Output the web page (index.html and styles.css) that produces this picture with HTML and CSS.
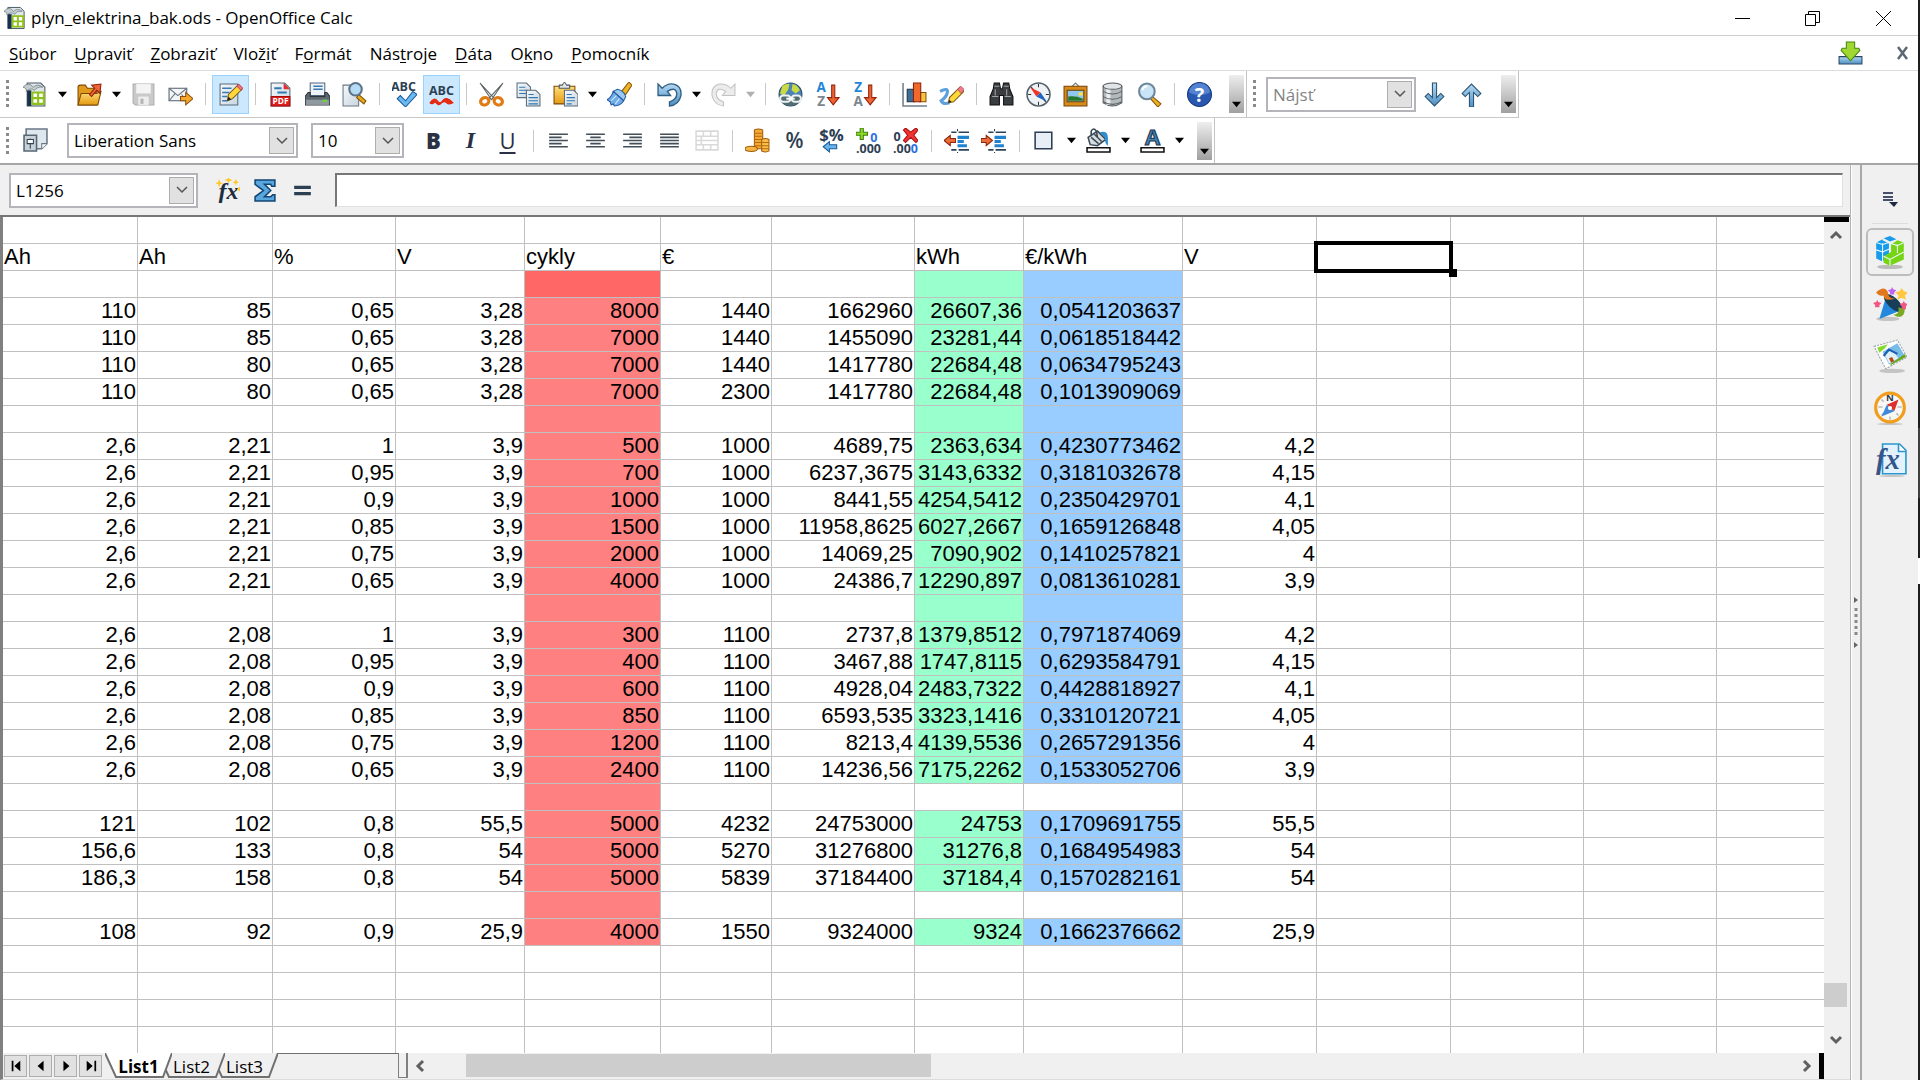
FILE: index.html
```html
<!DOCTYPE html>
<html lang="sk">
<head>
<meta charset="utf-8">
<title>plyn_elektrina_bak.ods - OpenOffice Calc</title>
<link rel="stylesheet" href="styles.css">
</head>
<body>
<svg class="defs" aria-hidden="true">
  <defs>
    <linearGradient id="gold" x1="0" y1="0" x2="0" y2="1"><stop offset="0" stop-color="#ffdf7a"/><stop offset="1" stop-color="#e59a10"/></linearGradient>
    <linearGradient id="blue" x1="0" y1="0" x2="0" y2="1"><stop offset="0" stop-color="#b4d8f2"/><stop offset="1" stop-color="#4b8fc4"/></linearGradient>
    <linearGradient id="paper" x1="0" y1="0" x2="1" y2="1"><stop offset="0" stop-color="#f6f9fb"/><stop offset="1" stop-color="#c9d5df"/></linearGradient>
    <symbol id="i-new" viewBox="0 0 24 24"><path d="M4 1h13l4 4v18H4z" fill="#dfe6ea" stroke="#4a5963"/><path d="M4 8h4v15H4z" fill="#17304f"/><path d="M0 5q5-6 10 0 4-4 9 0-5-1-8 3-4-3-8 1 1-3-3-4z" fill="#c4ced1" stroke="#56676c" stroke-width=".6"/><path d="M9 10h11v11H9z" fill="#fff" stroke="#8fc01d" stroke-width="2"/><path d="M14.500 10v11M9 15.500h11" stroke="#8fc01d" stroke-width="2"/></symbol>
    <symbol id="i-open" viewBox="0 0 24 24"><path d="M1 5q0-2 2-2h5l2 3h9v16H1z" fill="#e29a1b" stroke="#7c4706"/><path d="M4 11h15l4-2-3 13H1z" fill="url(#gold)" stroke="#7c4706"/><path d="M12 12l5-6-3-3 9-1-1 9-3-3-5 6z" fill="#ef6437" stroke="#8c200b"/></symbol>
    <symbol id="i-save" viewBox="0 0 24 24"><path d="M2 2h20v20H4l-2-2z" fill="#c9c9c9" stroke="#adadad"/><path d="M5 2h14v9H5z" fill="#f4f4f4"/><path d="M7 14h10v8H7z" fill="#eee"/><path d="M9 16h3v5H9z" fill="#b5b5b5"/></symbol>
    <symbol id="i-mail" viewBox="0 0 24 24"><path d="M1 6h17v12H1z" fill="#f3f5f6" stroke="#526070"/><path d="M1 6l8.500 7L18 6M1 18l6-7M18 18l-5-6" fill="none" stroke="#64717e"/><path d="M12 14h5v-4l7 6-7 6v-4h-5z" fill="#f6a82b" stroke="#8b4f09"/></symbol>
    <symbol id="i-edit" viewBox="0 0 24 24"><path d="M2 2h17v20H2z" fill="url(#paper)" stroke="#5b6b78"/><path d="M4 6h9M4 10h7M4 14h5M4 18h5" stroke="#3a7ab2" stroke-width="1.500"/><path d="M9 18l1-6L19 3l4 4-9 9z" fill="#ffd63c" stroke="#7a5a0c"/><path d="M18 4l2-2 4 4-2 2z" fill="#f06b7f" stroke="#a02238" stroke-width=".6"/><path d="M9 18l1-4 3 3z" fill="#222"/></symbol>
    <symbol id="i-pdf" viewBox="0 0 24 24"><path d="M3 1h13l5 5v17H3z" fill="url(#paper)" stroke="#56657a"/><path d="M15 1l6 6h-6z" fill="#e23030"/><path d="M6 6h7M9 10h9" stroke="#2f78b4" stroke-width="2"/><path d="M3 14h18v9H3z" fill="#e01d1d" stroke="#a30b0b"/><text x="12" y="21" class="t-pdf">PDF</text></symbol>
    <symbol id="i-print" viewBox="0 0 24 24"><path d="M5 1h14v12H5z" fill="#eef4fa" stroke="#56657a"/><path d="M8 4h9M8 7h9" stroke="#3a7ab2" stroke-width="1.500"/><path d="M3 10h2v4h14v-4h2l3 4v8H0v-8z" fill="#5d676e" stroke="#2d3439"/><path d="M1 17h22v5H1z" fill="#8f999e"/><path d="M17 17h4v2h-4z" fill="#66e02b"/></symbol>
    <symbol id="i-preview" viewBox="0 0 24 24"><path d="M1 3h15v20H1z" fill="url(#paper)" stroke="#6b7882"/><path d="M16 12l7 6-2 3-7-6z" fill="#e8a91e" stroke="#84540c"/><circle cx="13" cy="7" r="6" fill="#b5dcf4" stroke="#5c7388" stroke-width="2"/></symbol>
    <symbol id="i-spell" viewBox="0 0 24 24"><text x="11" y="9" class="t-abc">ABC</text><path d="M5 16l3-3 5 5 7-9 4 3-11 12z" fill="#6ab9ef" stroke="#1a5a9b"/></symbol>
    <symbol id="i-autospell" viewBox="0 0 24 24"><text x="12" y="12" class="t-abc">ABC</text><path d="M1 20q4-6 7-2t5 0q4-5 10 2-4 2-6 0t-5 0q-3 4-6-1-3 3-5 1z" fill="#ee2a10" stroke="#e0240c"/></symbol>
    <symbol id="i-cut" viewBox="0 0 24 24"><path d="M1 1l13 14-2 2zM23 1L10 15l2 2z" fill="#dfe4e6" stroke="#5b6367"/><ellipse cx="5.500" cy="18.500" rx="4" ry="3.500" fill="none" stroke="#e07a12" stroke-width="3" transform="rotate(-25 5.500 18.500)"/><ellipse cx="18.500" cy="18.500" rx="4" ry="3.500" fill="none" stroke="#e07a12" stroke-width="3" transform="rotate(25 18.500 18.500)"/></symbol>
    <symbol id="i-copy" viewBox="0 0 24 24"><path d="M1 1h9l4 4v10H1z" fill="url(#paper)" stroke="#5c6c7b"/><path d="M3 5h6M3 8h8M3 11h8" stroke="#2f78b4"/><path d="M10 8h9l4 4v11H10z" fill="url(#paper)" stroke="#5c6c7b"/><path d="M12 12h5M12 15h9M12 18h9M12 21h9" stroke="#2f78b4"/></symbol>
    <symbol id="i-paste" viewBox="0 0 24 24"><path d="M1 4h20v17H1z" fill="url(#gold)" stroke="#7c4706"/><path d="M6 6V3h3q2-5 4 0h3v3z" fill="#e3e7e9" stroke="#4f585e"/><path d="M11 8h9l4 4v11H11z" fill="url(#paper)" stroke="#5c6c7b"/><path d="M13 12h5M13 15h8M13 18h8M13 21h5" stroke="#2f78b4"/></symbol>
    <symbol id="i-brush" viewBox="0 0 24 24"><path d="M14 9l7-9 3 3-6 9z" fill="#edb326" stroke="#8a5608"/><path d="M10 7q6 1 8 7l-2 4-10-9z" fill="#9bc8ee" stroke="#23609c"/><path d="M6 9l10 9q-3 5-9 5l-1-2-2 1-1-3-3-2q4-2 6-8z" fill="#6facea" stroke="#23559b"/><path d="M9 13l-5 5M12 16l-4 5" stroke="#d5ebfc"/></symbol>
    <symbol id="i-undo" viewBox="0 0 24 24"><path d="M1 2l4 4Q10 1 16 2q8 2 7 11-2 9-11 10v-4q7-2 7-8-1-7-9-2l3 4H1z" fill="url(#blue)" stroke="#2f5f84" stroke-width="1.300"/></symbol>
    <symbol id="i-redo" viewBox="0 0 24 24"><path d="M23 2l-4 4Q14 1 8 2 0 4 1 13q2 9 11 10v-4q-7-2-7-8 1-7 9-2l-3 4h12z" fill="#ececec" stroke="#c3c3c3"/></symbol>
    <symbol id="i-link" viewBox="0 0 24 24"><circle cx="12" cy="12" r="11" fill="#4a83b8" stroke="#284967"/><path d="M4 4q4-3 7-2l-1 5-4 6-4-2zM14 2q5 1 7 6l-4 3-4-3z" fill="#c9da42"/><path d="M1 13h22l-2 6q-9 8-18 0z" fill="#526c72"/><rect x="2" y="13" width="10" height="6" rx="3" fill="none" stroke="#edf2f3" stroke-width="2"/><rect x="13" y="13" width="9" height="6" rx="3" fill="none" stroke="#edf2f3" stroke-width="2"/><path d="M8 16h8" stroke="#fff" stroke-width="2"/></symbol>
    <symbol id="i-arrow-sort" viewBox="0 0 24 24"><path d="M16 3h3v12h4l-5.500 7L12 15h4z" fill="#ee6336" stroke="#93240a"/></symbol>
    <symbol id="i-sort-az" viewBox="0 0 24 24"><text x="6" y="10" class="t-sort t-blue">A</text><text x="6" y="23" class="t-sort t-gray">Z</text><use href="#i-arrow-sort"/></symbol>
    <symbol id="i-sort-za" viewBox="0 0 24 24"><text x="6" y="10" class="t-sort t-blue">Z</text><text x="6" y="23" class="t-sort t-gray">A</text><use href="#i-arrow-sort"/></symbol>
    <symbol id="i-chart" viewBox="0 0 24 24"><path d="M1 1v22h23" fill="none" stroke="#73808b" stroke-width="1.500"/><path d="M5 7h7v12H5z" fill="#3c6d93" stroke="#1b3147"/><path d="M17 10h6v9h-6z" fill="#f8c43a" stroke="#8a4c0b"/><path d="M11 1h7v18h-7z" fill="#f0682a" stroke="#8b220b"/></symbol>
    <symbol id="i-draw" viewBox="0 0 24 24"><path d="M1 9q8-4 7 1-1 5-6 8 2 4 8 2" fill="none" stroke="#5e9fde" stroke-width="3"/><path d="M9 20l1-5L20 5l4 4-10 10z" fill="#ffd63c" stroke="#7a5a0c"/><path d="M18 7l3-3 3 3-3 4z" fill="#f17b8c" stroke="#a53a4a" stroke-width=".6"/><path d="M9 20l1-3 2 2z" fill="#222"/></symbol>
    <symbol id="i-find" viewBox="0 0 24 24"><path d="M5 1h5l1 5 1 1 1-1 1-5h5l1 6 3 7v8h-9v-9h-4v9H1v-8l3-7z" fill="#3a3d3f" stroke="#111"/><path d="M5 4h5M14 4h5M3 14h6M15 14h6M6 7v6M17 7v6" stroke="#a1a4a6"/></symbol>
    <symbol id="i-nav" viewBox="0 0 24 24"><circle cx="12" cy="12" r="11" fill="#eef2f4" stroke="#53606b" stroke-width="1.500"/><path d="M12 2v3M12 19v3M2 12h3M19 12h3M5 5l2 2M17 17l2 2" stroke="#333"/><path d="M4 5l10 5-4 4z" fill="#ef3324"/><path d="M20 19l-6-9-4 4z" fill="#2263c4"/></symbol>
    <symbol id="i-gallery" viewBox="0 0 24 24"><path d="M8 5l4-4 4 4" fill="none" stroke="#777"/><path d="M1 4h22v19H1z" fill="#d78a18" stroke="#78450b"/><path d="M4 8h16v11H4z" fill="#8ec8ee" stroke="#65410b"/><path d="M5 18v-4q7-1 14 2v2z" fill="#267828"/><path d="M15 10h4v3h-4z" fill="#ffe04a"/></symbol>
    <symbol id="i-db" viewBox="0 0 24 24"><path d="M3 4v16q9 6 18 0V4z" fill="#b4b9bc" stroke="#53595d"/><path d="M8 5v17" stroke="#eceeef" stroke-width="4"/><ellipse cx="12" cy="4" rx="9" ry="3" fill="#e2e5e7" stroke="#53595d"/><path d="M3 9q9 5 18 0M3 14q9 5 18 0M3 19q9 5 18 0" fill="none" stroke="#596065"/></symbol>
    <symbol id="i-zoom" viewBox="0 0 24 24"><path d="M15 14l8 7-3 3-7-8z" fill="#edb024" stroke="#875707"/><circle cx="9.500" cy="9" r="7.500" fill="#c8e4f6" stroke="#6e8699" stroke-width="2"/><path d="M5 8q1-4 5-4" fill="none" stroke="#fff" stroke-width="2"/></symbol>
    <symbol id="i-help" viewBox="0 0 24 24"><circle cx="12" cy="12" r="11.500" fill="#2858b0" stroke="#17377f"/><path d="M2 10a10 9 0 0 1 20 0q-10 5-20 0z" fill="#5483d0"/><text x="12" y="19" class="t-help">?</text></symbol>
    <symbol id="i-styles" viewBox="0 0 24 24"><path d="M3 1h20v14l-5 5H3z" fill="#dfe7ee" stroke="#687785" stroke-width="1.500"/><path d="M18 20v-5h5" fill="#fff" stroke="#687785"/><path d="M1 7h12v15H1z" fill="#c7d2db" stroke="#566673" stroke-width="1.500"/><path d="M7 10v10" stroke="#34424e"/><path d="M4 11h6v4H4z" fill="#fff" stroke="#34424e"/></symbol>
    <symbol id="i-left" viewBox="0 0 24 24"><path d="M3 6h18M3 9h12M3 12h18M3 15h12M3 18h18" stroke="#434f58" stroke-width="1.500"/></symbol>
    <symbol id="i-center" viewBox="0 0 24 24"><path d="M3 6h18M7 9h10M3 12h18M7 15h10M3 18h18" stroke="#434f58" stroke-width="1.500"/></symbol>
    <symbol id="i-right" viewBox="0 0 24 24"><path d="M3 6h18M9 9h12M3 12h18M9 15h12M3 18h18" stroke="#434f58" stroke-width="1.500"/></symbol>
    <symbol id="i-justify" viewBox="0 0 24 24"><path d="M3 6h18M3 9h18M3 12h18M3 15h18M3 18h18" stroke="#434f58" stroke-width="1.500"/></symbol>
    <symbol id="i-merge" viewBox="0 0 24 24"><path d="M2 3h21v18H2zM2 8h21M2 12h21M2 16h21M9 3v5M16 3v5M9 16v5M16 16v5M7 8v8" fill="none" stroke="#d9d9d9" stroke-width="1.500"/></symbol>
    <symbol id="i-money" viewBox="0 0 24 24"><path d="M9 2q4-2 8 0v18H9z" fill="#f4aa33" stroke="#a25b09"/><path d="M16 11q4-2 7 0v11q-3 2-7 0z" fill="#f8bd4a" stroke="#a25b09"/><path d="M9 5h8M9 8h8M9 11h7M9 14h7M9 17h7M16 14h7M16 17h7M16 20h7" stroke="#b66b0c"/><ellipse cx="6" cy="20" rx="6" ry="2.500" fill="#f6b445" stroke="#a25b09"/></symbol>
    <symbol id="i-percent" viewBox="0 0 24 24"><text x="12" y="19" class="t-percent">%</text></symbol>
    <symbol id="i-standard" viewBox="0 0 24 24"><text x="12" y="12" class="t-num">$%</text><path d="M4 18l6-5v3h7v4h-7v3z" fill="#6ab5ec" stroke="#1c5b96"/></symbol>
    <symbol id="i-adddec" viewBox="0 0 24 24"><path d="M4 0h3v4h4v3H7v4H4V7H0V4h4z" fill="#92d629" stroke="#3b8209"/><text x="17" y="13" class="t-dec t-navyblue">0</text><text x="12" y="24" class="t-dec">.000</text></symbol>
    <symbol id="i-deldec" viewBox="0 0 24 24"><text x="4" y="12" class="t-dec">0</text><text x="12" y="24" class="t-dec">.00<tspan class="t-navyblue">0</tspan></text><path d="M10 2l2-2 5 4 5-4 2 2-4 5 4 5-2 2-5-5-5 5-2-2 4-5z" fill="#ef3434" stroke="#a80d0d"/></symbol>
    <symbol id="i-indent-lines" viewBox="0 0 24 24"><path d="M7 4h5M14 4h10M7 21h5M14 21h10" stroke="#2d4358" stroke-width="1.500"/><path d="M13 9h11M13 13h6M13 17h9" stroke="#1f83d0" stroke-width="3"/><path d="M13 1v23" stroke="#2d4358" stroke-dasharray="2 20"/></symbol>
    <symbol id="i-outdent" viewBox="0 0 24 24"><use href="#i-indent-lines"/><path d="M0 12l6-5v3h5v4H6v3z" fill="#ea6c38" stroke="#8c250b"/></symbol>
    <symbol id="i-indent" viewBox="0 0 24 24"><use href="#i-indent-lines"/><path d="M11 12L5 7v3H0v4h5v3z" fill="#ea6c38" stroke="#8c250b"/></symbol>
    <symbol id="i-border" viewBox="0 0 24 24"><path d="M3 4h16v16H3z" fill="#e7eef5" stroke="#2d3f52" stroke-width="1.500"/></symbol>
    <symbol id="i-fill" viewBox="0 0 24 24"><path d="M2 9l9-6 8 8-8 6-7-1z" fill="#d7dcdf" stroke="#3b4a56" stroke-width="1.500"/><path d="M5 8V3q2-4 5 0l1 6M8 6l7 7M5 9l7 6" fill="none" stroke="#3b4a56" stroke-width="1.500"/><path d="M13 4q8-2 8 5v8q-3-2-3-8l-3-3z" fill="#2d8fd0"/><path d="M1 19h22v4H1z" fill="#fff" stroke="#111" stroke-width="1.500"/></symbol>
    <symbol id="i-fontcolor" viewBox="0 0 24 24"><text x="12" y="16" class="t-fontcolor">A</text><path d="M1 19h22v4H1z" fill="#fff" stroke="#111" stroke-width="1.500"/></symbol>
    <symbol id="i-down" viewBox="0 0 24 24"><path d="M10 1h4v14l4-4 3 3-9 9-9-9 3-3 4 4z" fill="url(#blue)" stroke="#28506f"/></symbol>
    <symbol id="i-up" viewBox="0 0 24 24"><path d="M10 24h4V10l4 4 3-3-9-9-9 9 3 3 4-4z" fill="url(#blue)" stroke="#28506f"/></symbol>
    <symbol id="i-fx" viewBox="0 0 24 24"><text x="12" y="20" class="t-fx">fx</text><path d="M3 1l1 3 3 1-3 1-1 3-1-3-3-1 3-1zM12-1l1 2 3 1-3 1-1 2-1-2-3-1 3-1zM19 1l1 2 2 1-2 1-1 2-1-2-2-1 2-1zM23 8v5l-3-2z" fill="#ffc62c"/></symbol>
    <symbol id="i-sum" viewBox="0 0 24 24"><path d="M2 2h19v6h-3l-1-2h-6l6 6-6 6h6l2-2h2v6H2v-4l8-6-8-6z" fill="#5aa7df" stroke="#114673" stroke-width="1.500"/></symbol>
    <symbol id="i-equals" viewBox="0 0 24 24"><path d="M4 9h16M4 15h16" stroke="#2d3f52" stroke-width="3"/></symbol>
    <symbol id="i-update" viewBox="0 0 24 24"><path d="M1 15h22v7H1z" fill="url(#blue)" stroke="#2a4560"/><path d="M8 1h8v6h4l1 2-9 10L3 9l1-2h4z" fill="#a1d733" stroke="#45870b"/></symbol>
    <symbol id="i-chev-down" viewBox="0 0 14 14"><path d="M2 4l5 5 5-5" fill="none" stroke="currentColor" stroke-width="1.500"/></symbol>
    <symbol id="i-caret" viewBox="0 0 10 10"><path d="M0 2h10L5 8z" fill="currentColor"/></symbol>
    <symbol id="s-cubes" viewBox="0 0 32 32"><ellipse cx="16" cy="30" rx="12" ry="2" fill="#bbb"/><path d="M3 7l6-3v21l-6-3zM9 5l6 3v18l-6-2zM10 3l6-2 6 3-6 2z" fill="#189bea"/><path d="M17 9l6-4 6 2v16l-13 6-6-3v-6l7-4z" fill="#76d414"/><path d="M3 14l6 2 7-3M9 8v17M10 20l6 3 13-7M16 8v5M23 9v8M16 23v6M3 7l6 2 6-2M17 8l6 2 6-3" fill="none" stroke="#e9fbff"/></symbol>
    <symbol id="s-magic" viewBox="0 0 32 32"><ellipse cx="14" cy="30" rx="11" ry="2" fill="#c4c4c4"/><path d="M6 30l6-20q12 2 14 12z" fill="#2388db"/><ellipse cx="19" cy="15" rx="11" ry="5" transform="rotate(43 19 15)" fill="#173d57"/><path d="M3 5q8-7 11 0 0 6 7 6-11 3-11-3-5 1-7-3z" fill="#e1781e"/><path d="M24 19q1 7-5 7 10 6 11-5z" fill="#7aaa22"/><path d="M27 1l2 3 4 1-3 3 1 4-4-2-4 2 1-4-3-3 4-1z" fill="#ffc83d"/><path d="M18 0l1 2 3 1-2 2v2h-2l-2 0v-2l-2-2 3-1z" fill="#c263ef"/><path d="M4 12l1 2 3 1-2 2v2H2v-2l-2-2 3-1zM29 13l1 2 3 1-2 2v3h-4v-3l-2-2 3-1z" fill="#f05781"/></symbol>
    <symbol id="s-picture" viewBox="0 0 32 32"><ellipse cx="18" cy="30" rx="12" ry="2" fill="#c4c4c4"/><path d="M1 7L23 1l9 16-20 11z" fill="#fff" stroke="#9da5a7" stroke-dasharray="2 1"/><path d="M4 8l10-3-3 4-5 4z" fill="#84d929"/><path d="M9 12l14-8 7 12-15 8z" fill="#78bce8"/><path d="M11 14l7-4 6 8-9 5z" fill="#dff0f8"/><path d="M10 16l5-6 8 4" fill="none" stroke="#1c5fae" stroke-width="2"/><path d="M17 23l13-9 1 3-15 8z" fill="#65a719"/><path d="M15 18l3-1 2 4-3 1z" fill="#b64a13"/></symbol>
    <symbol id="s-compass" viewBox="0 0 32 32"><ellipse cx="16" cy="31" rx="12" ry="1" fill="#c4c4c4"/><circle cx="16" cy="15.500" r="13.500" fill="#f8f8f6" stroke="#f19d1d" stroke-width="3"/><path d="M5 15h4M23 15h4M16 24v3M8 8l2 2M8 23l2-2M24 23l-2-2" stroke="#bbb" stroke-width="1.500"/><text x="16" y="9" class="t-north">N</text><path d="M24 8l-4 11-7-6z" fill="#de2f2b"/><path d="M8 24l5-11 7 6z" fill="#3e88de"/><circle cx="16" cy="16" r="2" fill="#fff"/></symbol>
    <symbol id="s-function" viewBox="0 0 32 32"><ellipse cx="18" cy="31" rx="12" ry="1" fill="#c4c4c4"/><path d="M9 1h16l6 6v22H9z" fill="#e3f2fc" stroke="#2c96cc" stroke-width="1.500"/><path d="M24 1v7h7" fill="#fff" stroke="#2c96cc" stroke-width="1.500"/><text x="14" y="24" class="t-func">fx</text></symbol>
  </defs>
</svg>

<div class="window">
  <header class="titlebar">
    <svg class="app-icon"><use href="#i-new"/></svg>
    <h1 class="title">plyn_elektrina_bak.ods - OpenOffice Calc</h1>
    <div class="window-buttons">
      <button aria-label="Minimalizovať"><svg viewBox="0 0 20 20"><path d="M2 10.500h15" stroke="#000"/></svg></button>
      <button aria-label="Obnoviť"><svg viewBox="0 0 20 20"><path d="M2.500 6.500h10v11h-10zM5.500 6V3.500h11v11H13" fill="none" stroke="#000"/></svg></button>
      <button aria-label="Zavrieť"><svg viewBox="0 0 20 20"><path d="M3 3l15 15M18 3L3 18" stroke="#000"/></svg></button>
    </div>
  </header>

  <nav class="menubar">
    <button><span><u>S</u>úbor</span></button>
    <button><span><u>U</u>praviť</span></button>
    <button><span><u>Z</u>obraziť</span></button>
    <button><span>Vlož<u>i</u>ť</span></button>
    <button><span>F<u>o</u>rmát</span></button>
    <button><span>Nás<u>t</u>roje</span></button>
    <button><span><u>D</u>áta</span></button>
    <button><span>O<u>k</u>no</span></button>
    <button><span><u>P</u>omocník</span></button>
    <div class="menu-right">
      <button aria-label="Aktualizácia"><svg class="icon"><use href="#i-update"/></svg></button>
      <button aria-label="Zavrieť dokument"><svg class="close-doc" viewBox="0 0 14 16"><path d="M2 2l9 12M11 2L2 14" stroke="#5b6772" stroke-width="2.500"/></svg></button>
    </div>
  </nav>

  <div class="toolrow">
    <div class="toolbar">
      <span class="grip"></span>
      <button class="tool" aria-label="Nový"><svg class="icon"><use href="#i-new"/></svg></button><button class="drop" aria-label="Nový, ponuka"><svg><use href="#i-caret"/></svg></button>
      <button class="tool" aria-label="Otvoriť"><svg class="icon"><use href="#i-open"/></svg></button><button class="drop" aria-label="Otvoriť, ponuka"><svg><use href="#i-caret"/></svg></button>
      <button class="tool" aria-label="Uložiť" disabled><svg class="icon"><use href="#i-save"/></svg></button>
      <button class="tool" aria-label="E-mail"><svg class="icon"><use href="#i-mail"/></svg></button>
      <span class="sep"></span>
      <button class="tool on" aria-label="Upraviť súbor"><svg class="icon"><use href="#i-edit"/></svg></button>
      <span class="sep"></span>
      <button class="tool" aria-label="Export do PDF"><svg class="icon"><use href="#i-pdf"/></svg></button>
      <button class="tool" aria-label="Tlačiť"><svg class="icon"><use href="#i-print"/></svg></button>
      <button class="tool" aria-label="Ukážka strany"><svg class="icon"><use href="#i-preview"/></svg></button>
      <span class="sep"></span>
      <button class="tool" aria-label="Kontrola pravopisu"><svg class="icon"><use href="#i-spell"/></svg></button>
      <button class="tool on" aria-label="Automatická kontrola pravopisu"><svg class="icon"><use href="#i-autospell"/></svg></button>
      <span class="sep"></span>
      <button class="tool" aria-label="Vystrihnúť"><svg class="icon"><use href="#i-cut"/></svg></button>
      <button class="tool" aria-label="Kopírovať"><svg class="icon"><use href="#i-copy"/></svg></button>
      <button class="tool" aria-label="Vložiť"><svg class="icon"><use href="#i-paste"/></svg></button><button class="drop" aria-label="Vložiť, ponuka"><svg><use href="#i-caret"/></svg></button>
      <button class="tool" aria-label="Štetec formátu"><svg class="icon"><use href="#i-brush"/></svg></button>
      <span class="sep"></span>
      <button class="tool" aria-label="Späť"><svg class="icon"><use href="#i-undo"/></svg></button><button class="drop" aria-label="Späť, ponuka"><svg><use href="#i-caret"/></svg></button>
      <button class="tool" aria-label="Znova" disabled><svg class="icon"><use href="#i-redo"/></svg></button><button class="drop off" aria-label="Znova, ponuka" disabled><svg><use href="#i-caret"/></svg></button>
      <span class="sep"></span>
      <button class="tool" aria-label="Hypertextový odkaz"><svg class="icon"><use href="#i-link"/></svg></button>
      <button class="tool" aria-label="Zoradiť vzostupne"><svg class="icon"><use href="#i-sort-az"/></svg></button>
      <button class="tool" aria-label="Zoradiť zostupne"><svg class="icon"><use href="#i-sort-za"/></svg></button>
      <span class="sep"></span>
      <button class="tool" aria-label="Graf"><svg class="icon"><use href="#i-chart"/></svg></button>
      <button class="tool" aria-label="Kresliť"><svg class="icon"><use href="#i-draw"/></svg></button>
      <span class="sep"></span>
      <button class="tool" aria-label="Hľadať"><svg class="icon"><use href="#i-find"/></svg></button>
      <button class="tool" aria-label="Navigátor"><svg class="icon"><use href="#i-nav"/></svg></button>
      <button class="tool" aria-label="Galéria"><svg class="icon"><use href="#i-gallery"/></svg></button>
      <button class="tool" aria-label="Zdroje dát"><svg class="icon"><use href="#i-db"/></svg></button>
      <button class="tool" aria-label="Lupa"><svg class="icon"><use href="#i-zoom"/></svg></button>
      <span class="sep"></span>
      <button class="tool" aria-label="Pomocník"><svg class="icon"><use href="#i-help"/></svg></button>
      <button class="overflow" aria-label="Viac"><svg><use href="#i-caret"/></svg></button>
    </div>
    <div class="toolbar">
      <span class="grip"></span>
      <div class="combo combo-find"><input type="text" placeholder="Nájsť" aria-label="Nájsť"><button aria-label="História hľadania"><svg><use href="#i-chev-down"/></svg></button></div>
      <button class="tool" aria-label="Nájsť ďalšie"><svg class="icon"><use href="#i-down"/></svg></button>
      <button class="tool" aria-label="Nájsť predchádzajúce"><svg class="icon"><use href="#i-up"/></svg></button>
      <button class="overflow" aria-label="Viac"><svg><use href="#i-caret"/></svg></button>
    </div>
  </div>

  <div class="toolrow toolrow-format">
    <div class="toolbar">
      <span class="grip"></span>
      <button class="tool" aria-label="Štýly"><svg class="icon"><use href="#i-styles"/></svg></button>
      <div class="combo combo-font"><select aria-label="Názov písma"><option>Liberation Sans</option></select><button aria-label="Zoznam písiem"><svg><use href="#i-chev-down"/></svg></button></div>
      <div class="combo combo-size"><select aria-label="Veľkosť písma"><option>10</option></select><button aria-label="Zoznam veľkostí"><svg><use href="#i-chev-down"/></svg></button></div>
      <button class="tool letter bold" aria-label="Tučné">B</button>
      <button class="tool letter italic" aria-label="Kurzíva">I</button>
      <button class="tool letter under" aria-label="Podčiarknuté">U</button>
      <span class="sep"></span>
      <button class="tool" aria-label="Vľavo"><svg class="icon"><use href="#i-left"/></svg></button>
      <button class="tool" aria-label="Na stred"><svg class="icon"><use href="#i-center"/></svg></button>
      <button class="tool" aria-label="Vpravo"><svg class="icon"><use href="#i-right"/></svg></button>
      <button class="tool" aria-label="Do bloku"><svg class="icon"><use href="#i-justify"/></svg></button>
      <button class="tool" aria-label="Zlúčiť bunky" disabled><svg class="icon"><use href="#i-merge"/></svg></button>
      <span class="sep"></span>
      <button class="tool" aria-label="Mena"><svg class="icon"><use href="#i-money"/></svg></button>
      <button class="tool" aria-label="Percentá"><svg class="icon"><use href="#i-percent"/></svg></button>
      <button class="tool" aria-label="Štandardný formát"><svg class="icon"><use href="#i-standard"/></svg></button>
      <button class="tool" aria-label="Pridať desatinné miesto"><svg class="icon"><use href="#i-adddec"/></svg></button>
      <button class="tool" aria-label="Odstrániť desatinné miesto"><svg class="icon"><use href="#i-deldec"/></svg></button>
      <span class="sep"></span>
      <button class="tool" aria-label="Zmenšiť odsadenie"><svg class="icon"><use href="#i-outdent"/></svg></button>
      <button class="tool" aria-label="Zväčšiť odsadenie"><svg class="icon"><use href="#i-indent"/></svg></button>
      <span class="sep"></span>
      <button class="tool" aria-label="Orámovanie"><svg class="icon"><use href="#i-border"/></svg></button><button class="drop" aria-label="Orámovanie, ponuka"><svg><use href="#i-caret"/></svg></button>
      <button class="tool" aria-label="Farba pozadia"><svg class="icon"><use href="#i-fill"/></svg></button><button class="drop" aria-label="Farba pozadia, ponuka"><svg><use href="#i-caret"/></svg></button>
      <button class="tool" aria-label="Farba písma"><svg class="icon"><use href="#i-fontcolor"/></svg></button><button class="drop" aria-label="Farba písma, ponuka"><svg><use href="#i-caret"/></svg></button>
      <button class="overflow" aria-label="Viac"><svg><use href="#i-caret"/></svg></button>
    </div>
  </div>

  <div class="workspace">
    <main class="document">
      <div class="formulabar">
        <div class="combo combo-name"><input type="text" value="L1256" aria-label="Pole názvu"><button aria-label="Zoznam názvov"><svg><use href="#i-chev-down"/></svg></button></div>
        <button class="tool" aria-label="Sprievodca funkciou"><svg class="icon"><use href="#i-fx"/></svg></button>
        <button class="tool" aria-label="Súčet"><svg class="icon"><use href="#i-sum"/></svg></button>
        <button class="tool" aria-label="Funkcia"><svg class="icon"><use href="#i-equals"/></svg></button>
        <input class="formula" type="text" aria-label="Vstupný riadok">
      </div>

      <div class="sheet-row">
        <div class="sheet">
          <table>
            <colgroup><col class="w135"><col class="w135"><col class="w123"><col class="w129"><col class="w136"><col class="w111"><col class="w143"><col class="w109"><col class="w159"><col class="w134"><col class="w134"><col class="w133"><col class="w133"><col></colgroup>
            <tbody>
            <tr><td><td><td><td><td><td><td><td><td><td><td><td><td><td></tr>
            <tr class="head"><td>Ah<td>Ah<td>%<td>V<td>cykly<td>€<td><td>kWh<td>€/kWh<td>V<td class="selected"><td><td><td></tr>
            <tr><td><td><td><td><td class="red-strong"><td><td><td class="green"><td class="blue"><td><td><td><td><td></tr>
            <tr><td>110<td>85<td>0,65<td>3,28<td class="red">8000<td>1440<td>1662960<td class="green">26607,36<td class="blue">0,0541203637<td><td><td><td><td></tr>
            <tr><td>110<td>85<td>0,65<td>3,28<td class="red">7000<td>1440<td>1455090<td class="green">23281,44<td class="blue">0,0618518442<td><td><td><td><td></tr>
            <tr><td>110<td>80<td>0,65<td>3,28<td class="red">7000<td>1440<td>1417780<td class="green">22684,48<td class="blue">0,0634795243<td><td><td><td><td></tr>
            <tr><td>110<td>80<td>0,65<td>3,28<td class="red">7000<td>2300<td>1417780<td class="green">22684,48<td class="blue">0,1013909069<td><td><td><td><td></tr>
            <tr><td><td><td><td><td class="red"><td><td><td class="green"><td class="blue"><td><td><td><td><td></tr>
            <tr><td>2,6<td>2,21<td>1<td>3,9<td class="red">500<td>1000<td>4689,75<td class="green">2363,634<td class="blue">0,4230773462<td>4,2<td><td><td><td></tr>
            <tr><td>2,6<td>2,21<td>0,95<td>3,9<td class="red">700<td>1000<td>6237,3675<td class="green">3143,6332<td class="blue">0,3181032678<td>4,15<td><td><td><td></tr>
            <tr><td>2,6<td>2,21<td>0,9<td>3,9<td class="red">1000<td>1000<td>8441,55<td class="green">4254,5412<td class="blue">0,2350429701<td>4,1<td><td><td><td></tr>
            <tr><td>2,6<td>2,21<td>0,85<td>3,9<td class="red">1500<td>1000<td>11958,8625<td class="green">6027,2667<td class="blue">0,1659126848<td>4,05<td><td><td><td></tr>
            <tr><td>2,6<td>2,21<td>0,75<td>3,9<td class="red">2000<td>1000<td>14069,25<td class="green">7090,902<td class="blue">0,1410257821<td>4<td><td><td><td></tr>
            <tr><td>2,6<td>2,21<td>0,65<td>3,9<td class="red">4000<td>1000<td>24386,7<td class="green">12290,897<td class="blue">0,0813610281<td>3,9<td><td><td><td></tr>
            <tr><td><td><td><td><td class="red"><td><td><td class="green"><td class="blue"><td><td><td><td><td></tr>
            <tr><td>2,6<td>2,08<td>1<td>3,9<td class="red">300<td>1100<td>2737,8<td class="green">1379,8512<td class="blue">0,7971874069<td>4,2<td><td><td><td></tr>
            <tr><td>2,6<td>2,08<td>0,95<td>3,9<td class="red">400<td>1100<td>3467,88<td class="green">1747,8115<td class="blue">0,6293584791<td>4,15<td><td><td><td></tr>
            <tr><td>2,6<td>2,08<td>0,9<td>3,9<td class="red">600<td>1100<td>4928,04<td class="green">2483,7322<td class="blue">0,4428818927<td>4,1<td><td><td><td></tr>
            <tr><td>2,6<td>2,08<td>0,85<td>3,9<td class="red">850<td>1100<td>6593,535<td class="green">3323,1416<td class="blue">0,3310120721<td>4,05<td><td><td><td></tr>
            <tr><td>2,6<td>2,08<td>0,75<td>3,9<td class="red">1200<td>1100<td>8213,4<td class="green">4139,5536<td class="blue">0,2657291356<td>4<td><td><td><td></tr>
            <tr><td>2,6<td>2,08<td>0,65<td>3,9<td class="red">2400<td>1100<td>14236,56<td class="green">7175,2262<td class="blue">0,1533052706<td>3,9<td><td><td><td></tr>
            <tr><td><td><td><td><td class="red"><td><td><td><td><td><td><td><td><td></tr>
            <tr><td>121<td>102<td>0,8<td>55,5<td class="red">5000<td>4232<td>24753000<td class="green">24753<td class="blue">0,1709691755<td>55,5<td><td><td><td></tr>
            <tr><td>156,6<td>133<td>0,8<td>54<td class="red">5000<td>5270<td>31276800<td class="green">31276,8<td class="blue">0,1684954983<td>54<td><td><td><td></tr>
            <tr><td>186,3<td>158<td>0,8<td>54<td class="red">5000<td>5839<td>37184400<td class="green">37184,4<td class="blue">0,1570282161<td>54<td><td><td><td></tr>
            <tr><td><td><td><td><td class="red"><td><td><td><td><td><td><td><td><td></tr>
            <tr><td>108<td>92<td>0,9<td>25,9<td class="red">4000<td>1550<td>9324000<td class="green">9324<td class="blue">0,1662376662<td>25,9<td><td><td><td></tr>
            <tr><td><td><td><td><td><td><td><td><td><td><td><td><td><td></tr>
            <tr><td><td><td><td><td><td><td><td><td><td><td><td><td><td></tr>
            <tr><td><td><td><td><td><td><td><td><td><td><td><td><td><td></tr>
            <tr><td><td><td><td><td><td><td><td><td><td><td><td><td><td></tr>
            </tbody>
          </table>
        </div>
        <div class="vscroll">
          <span class="vsplit"></span>
          <button aria-label="Nahor"><svg viewBox="0 0 14 14"><path d="M2 10l5-5 5 5" fill="none" stroke="#606060" stroke-width="3"/></svg></button>
          <div class="vtrack"><div class="vthumb"></div></div>
          <button aria-label="Nadol"><svg viewBox="0 0 14 14"><path d="M2 4l5 5 5-5" fill="none" stroke="#606060" stroke-width="3"/></svg></button>
        </div>
      </div>

      <div class="bottombar">
        <div class="sheet-nav">
          <button aria-label="Prvý hárok"><svg viewBox="0 0 14 14"><path d="M12 1v12L5 7zM2 1h2v12H2z"/></svg></button>
          <button aria-label="Predchádzajúci hárok"><svg viewBox="0 0 14 14"><path d="M10 1v12L3 7z"/></svg></button>
          <button aria-label="Nasledujúci hárok"><svg viewBox="0 0 14 14"><path d="M4 1v12l7-6z"/></svg></button>
          <button aria-label="Posledný hárok"><svg viewBox="0 0 14 14"><path d="M2 1v12l7-6zM11 1h2v12h-2z"/></svg></button>
        </div>
        <div class="tabs">
          <button class="tab active"><svg viewBox="0 0 67 26"><path d="M0 0l11 24h47L67 0" fill="#fff" stroke="#707070" stroke-width="2"/></svg><span>List1</span></button>
          <button class="tab second"><svg viewBox="0 0 67 26"><path d="M0 0l11 24h47L67 0" fill="#f0f0f0" stroke="#707070" stroke-width="2"/></svg><span>List2</span></button>
          <button class="tab"><svg viewBox="0 0 67 26"><path d="M0 0l11 24h47L67 0" fill="#f0f0f0" stroke="#707070" stroke-width="2"/></svg><span>List3</span></button>
        </div>
        <span class="tab-split"></span>
        <div class="hscroll">
          <button aria-label="Doľava"><svg viewBox="0 0 14 14"><path d="M10 2L5 7l5 5" fill="none" stroke="#606060" stroke-width="3"/></svg></button>
          <div class="htrack"><div class="hthumb"></div></div>
          <button aria-label="Doprava"><svg viewBox="0 0 14 14"><path d="M4 2l5 5-5 5" fill="none" stroke="#606060" stroke-width="3"/></svg></button>
          <span class="hsplit"></span>
        </div>
        <span class="corner"></span>
      </div>
    </main>

    <div class="splitter"><svg viewBox="0 0 6 54"><path d="M1 1l4 3-4 3zM1 46l4 3-4 3z" fill="#666"/><path d="M3 12v28" stroke="#888" stroke-width="3" stroke-dasharray="3 3"/></svg></div>

    <aside class="sidebar">
      <button class="side-menu" aria-label="Nastavenia bočnej lišty"><svg viewBox="0 0 16 16"><path d="M1 2h10M1 6h10M1 9h10" stroke="#44506b" stroke-width="2"/><path d="M7 11h9l-4 5z" fill="#1c2940"/></svg></button>
      <button class="side on" aria-label="Vlastnosti"><svg><use href="#s-cubes"/></svg></button>
      <button class="side" aria-label="Štýly a formátovanie"><svg><use href="#s-magic"/></svg></button>
      <button class="side" aria-label="Galéria"><svg><use href="#s-picture"/></svg></button>
      <button class="side" aria-label="Navigátor"><svg><use href="#s-compass"/></svg></button>
      <button class="side" aria-label="Funkcie"><svg><use href="#s-function"/></svg></button>
    </aside>
  </div>
</div>
<div class="desktop-edge"></div>
</body>
</html>
```
FILE: styles.css
```css
* { box-sizing: border-box; }

body {
  margin: 0;
  display: flex;
  height: 100vh;
  overflow: hidden;
  background: #fff;
  color: #000;
  font: 17px "Open Sans", "Noto Sans", sans-serif;
}

button, input, select { font: inherit; color: inherit; }

button {
  display: flex;
  align-items: center;
  justify-content: center;
  margin: 0;
  padding: 0;
  border: 0;
  background: none;
}

.defs { position: absolute; width: 0; height: 0; }
.icon { width: 25px; height: 25px; overflow: visible; }

.window { flex: 1; min-width: 0; display: flex; flex-direction: column; }

.desktop-edge {
  width: 2px;
  background: linear-gradient(#1e1e1e 0 428px, #3d413d 428px 498px, #1e1e1e 498px 558px, #fff 558px 584px, #1e1e1e 584px);
}

/* Title bar */
.titlebar {
  display: flex;
  align-items: center;
  height: 36px;
  padding-left: 4px;
  border-bottom: 1px solid #cfcfcf;
}
.app-icon { width: 23px; height: 24px; margin-right: 4px; }
.title { flex: 1; margin: 0; font-size: 17px; font-weight: 400; }
.window-buttons { display: flex; }
.window-buttons button { width: 70px; height: 32px; }
.window-buttons svg { width: 20px; height: 20px; }

/* Menu */
.menubar {
  display: flex;
  align-items: center;
  gap: 18px;
  height: 35px;
  padding-left: 9px;
  border-bottom: 1px solid #dcdcdc;
}
.menubar u { text-decoration: underline 1px; text-underline-offset: 2px; text-decoration-skip-ink: none; }
.menu-right { display: flex; align-items: center; gap: 33px; margin-left: auto; padding-right: 8px; }
.close-doc { width: 14px; height: 16px; }

/* Toolbars */
.toolrow { display: flex; height: 47px; }
.toolrow-format { border-bottom: 2px solid #a6a6a6; }
.toolbar {
  display: flex;
  align-items: center;
  padding-left: 6px;
  border-right: 1px solid #c3c3c3;
  border-bottom: 1px solid #c9c9c9;
}
.toolrow-format .toolbar { border-bottom: 0; }
.grip {
  width: 3px;
  height: 28px;
  margin-right: 8px;
  background: repeating-linear-gradient(#8a8a8a 0 3px, transparent 3px 6px);
}
.tool { width: 37px; height: 39px; }
.tool.on { background: #cce8ff; border: 1px solid #99d1ff; }
.drop { width: 17px; height: 39px; }
.drop svg, .overflow svg { width: 9px; height: 9px; }
.off { color: #b0b0b0; }
.sep { width: 13px; height: 22px; background: linear-gradient(#c8c8c8, #c8c8c8) center / 1px 100% no-repeat; }
.toolrow-format .sep { width: 14px; }
.overflow {
  width: 15px;
  height: 38px;
  margin: 0 2px 0 11px;
  padding-bottom: 4px;
  align-items: flex-end;
  background: linear-gradient(#eee, #a0a0a0);
}
.toolrow-format .overflow { margin-left: 9px; }

.letter { color: #2b3144; font-size: 22px; line-height: 24px; padding-bottom: 2px; }
.bold { font-weight: 800; }
.italic { font-family: "Liberation Serif", serif; font-style: italic; font-weight: 700; font-size: 24px; }
.under { text-decoration: underline; text-decoration-thickness: 2px; text-underline-offset: 3px; }

.combo {
  display: flex;
  height: 35px;
  padding: 2px;
  border: 2px solid #b4b4ba;
  background: #fff;
}
.combo input, .combo select {
  flex: 1;
  min-width: 0;
  padding: 0 0 0 3px;
  border: 0;
  outline: 0;
  background: none;
  appearance: none;
}
.combo input::placeholder { color: #858585; opacity: 1; }
.combo button { width: 25px; background: #e1e1e1; border: 1px solid #adadad; color: #555; }
.combo svg { width: 14px; height: 14px; }
.combo-find { width: 150px; margin-left: 2px; }
.combo-font { width: 231px; margin-left: 13px; }
.combo-size { width: 93px; margin: 0 11px 0 13px; }
.combo-name { width: 189px; margin-right: 12px; }

/* Lettering inside icons */
text { text-anchor: middle; font-family: "Open Sans", sans-serif; font-weight: 700; fill: #2d4053; }
.t-pdf { font-size: 8px; fill: #fff; }
.t-abc { font-size: 12px; }
.t-sort { font-size: 13px; }
.t-blue { fill: #1d86d8; }
.t-gray { fill: #7c868e; }
.t-help { font-size: 19px; fill: #fff; }
.t-percent { font-size: 20px; font-weight: 600; }
.t-num { font-size: 16px; }
.t-dec { font-size: 12px; }
.t-navyblue { fill: #2f6fe0; }
.t-fontcolor { font-size: 21px; fill: #4182b4; stroke: #1d3349; stroke-width: 1px; }
.t-fx { font: italic 700 23px "Liberation Serif", serif; fill: #1d2e3f; }
.t-func { font: italic 700 27px "Liberation Serif", serif; fill: #35568c; }
.t-north { font-size: 9px; }

/* Document area */
.workspace { flex: 1; min-height: 0; display: flex; background: #f0f0f0; }
.document { flex: 1; min-width: 0; display: flex; flex-direction: column; border-right: 1px solid #b4b4b4; }

.formulabar {
  display: flex;
  align-items: center;
  height: 52px;
  padding: 0 7px 0 9px;
  border-bottom: 2px solid #777;
}
.formula {
  flex: 1;
  height: 34px;
  margin-left: 14px;
  border: 1px solid #e0e0e0;
  border-top: 2px solid #777;
  border-left: 2px solid #777;
  background: #fff;
  outline: 0;
}

.sheet-row { flex: 1; min-height: 0; display: flex; }
.sheet { flex: 1; min-width: 0; overflow: hidden; border-left: 3px solid #808080; background: #fff; }
.sheet table { width: 100%; table-layout: fixed; border-collapse: separate; border-spacing: 0; }
.w109 { width: 109px; }
.w111 { width: 111px; }
.w123 { width: 123px; }
.w129 { width: 129px; }
.w133 { width: 133px; }
.w134 { width: 134px; }
.w135 { width: 135px; }
.w136 { width: 136px; }
.w143 { width: 143px; }
.w159 { width: 159px; }
.sheet td {
  position: relative;
  height: 27px;
  padding: 0 1px;
  border-right: 1px solid #c0c0c0;
  border-bottom: 1px solid #c0c0c0;
  font: 22px/26px "Liberation Sans", Arial, sans-serif;
  text-align: right;
  white-space: nowrap;
}
.sheet td:last-child { border-right: 0; }
.sheet .head td { text-align: left; }
.sheet .red { background: #ff8080; }
.sheet .red-strong { background: #f66; }
.sheet .green { background: #9fc; }
.sheet .blue { background: #9cf; }
.selected::before { content: ""; position: absolute; inset: -3px; border: 4px solid #000; z-index: 1; }
.selected::after { content: ""; position: absolute; right: -7px; bottom: -7px; width: 8px; height: 8px; background: #000; z-index: 1; }

/* Scroll bars */
.vscroll { width: 26px; display: flex; flex-direction: column; padding-right: 1px; }
.vsplit { height: 5px; background: #000; }
.vscroll button, .hscroll button { width: 24px; height: 26px; }
.vscroll svg, .hscroll svg { width: 14px; height: 14px; }
.vtrack { flex: 1; display: flex; flex-direction: column; justify-content: flex-end; padding-bottom: 20px; }
.vthumb { width: 23px; height: 24px; background: #cdcdcd; }

.bottombar { display: flex; height: 27px; border-left: 3px solid #808080; border-bottom: 1px solid #dcdcdc; }
.sheet-nav { display: flex; gap: 2px; padding: 2px 3px 2px 1px; }
.sheet-nav button { width: 23px; height: 22px; background: #e1e1e1; border: 1px solid #adadad; }
.sheet-nav svg { width: 12px; height: 14px; }
.tabs { display: flex; width: 293px; background: linear-gradient(#707070, #707070) right top / 227px 1px no-repeat; }
.tab { position: relative; width: 67px; height: 26px; margin-right: -14px; }
.tab svg { position: absolute; inset: 0; width: 67px; height: 26px; }
.tab span { position: relative; }
.tab.active { z-index: 2; font-weight: 700; }
.tab.second { z-index: 1; }
.tab-split { width: 10px; height: 25px; border: 1px solid #808080; border-right-width: 2px; border-top: 0; background: #f0f0f0; }
.hscroll { flex: 1; display: flex; }
.htrack { flex: 1; padding: 1px 0 2px 34px; }
.hthumb { width: 35%; height: 100%; background: #cdcdcd; }
.hsplit { width: 5px; background: #000; }
.corner { width: 26px; }

/* Sidebar */
.splitter { width: 9px; display: flex; align-items: center; justify-content: center; border-left: 1px solid #fff; }
.splitter svg { width: 6px; height: 54px; }
.sidebar {
  width: 58px;
  display: flex;
  flex-direction: column;
  align-items: center;
  gap: 4px;
  border-left: 2px solid #a8a8a8;
}
.side-menu { width: 36px; height: 59px; padding-top: 10px; border-bottom: 1px solid #dcdcdc; }
.side-menu svg { width: 16px; height: 16px; }
.side { width: 48px; height: 48px; }
.side.on { border: 2px solid #bdbdbd; border-radius: 6px; }
.side svg { width: 34px; height: 34px; }
```
